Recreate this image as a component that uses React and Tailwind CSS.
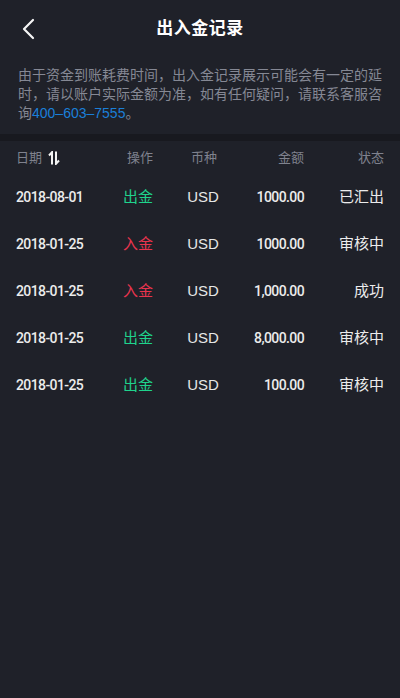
import React from "react";

const records = [
  { date: "2018-08-01", type: "out", currency: "USD", amount: "1000.00", status: "已汇出" },
  { date: "2018-01-25", type: "in", currency: "USD", amount: "1000.00", status: "审核中" },
  { date: "2018-01-25", type: "in", currency: "USD", amount: "1,000.00", status: "成功" },
  { date: "2018-01-25", type: "out", currency: "USD", amount: "8,000.00", status: "审核中" },
  { date: "2018-01-25", type: "out", currency: "USD", amount: "100.00", status: "审核中" },
];

const font = { fontFamily: "Roboto, 'Noto Sans CJK SC', sans-serif" };

const SortIcon = () => (
  <svg width="12" height="14" viewBox="0 0 12 14" fill="none" stroke="#f2f2f2" strokeWidth="2">
    <path d="M4 13.5V1.2L1 4.5" />
    <path d="M8 0.5V12.8L11 9.5" />
  </svg>
);

const App = () => {
  return (
    <div
      className="w-[400px] h-[698px] bg-[#1f2129] text-white overflow-hidden"
      style={font}
    >
      {/* HEADER */}
      <div className="h-[58px] relative flex items-center justify-center">
        <button className="absolute left-[18px] top-[14px] p-1">
          <svg width="14" height="22" viewBox="0 0 14 22" fill="none" stroke="#f5f5f5" strokeWidth="2.2" strokeLinecap="round" strokeLinejoin="round">
            <path d="M11 2L2 11L11 20" />
          </svg>
        </button>
        <h1 className="text-[17px] font-bold tracking-[0.5px]">出入金记录</h1>
      </div>

      {/* NOTICE */}
      <p className="px-[18px] pt-[8px] h-[76px] text-[14px] leading-[19px] text-[#858894]">
        由于资金到账耗费时间，出入金记录展示可能会有一定的延时，请以账户实际金额为准，如有任何疑问，请联系客服咨询
        <span className="text-[#1b7fd8] font-['Liberation_Sans',sans-serif]">400–603–7555</span>。
      </p>

      <div className="h-[7px] bg-[#18191f]" />

      {/* TABLE HEAD */}
      <div className="h-[33px] px-4 flex items-center text-[13px] text-[#7f828e]">
        <div className="w-[100px] flex items-center gap-[6px]">
          日期
          <SortIcon />
        </div>
        <div className="w-[48px] text-center">操作</div>
        <div className="w-[80px] text-center">币种</div>
        <div className="w-[60px] text-right">金额</div>
        <div className="w-[80px] text-right">状态</div>
      </div>

      {/* ROWS */}
      {records.map((r, i) => (
        <div key={i} className="h-[47px] px-4 flex items-center">
          <div className="w-[98px] text-[14px] font-medium tracking-[-0.6px] text-[#ececec]">
            {r.date}
          </div>
          <div
            className={
              r.type === "out"
                ? "w-[48px] text-center text-[15px] text-[#1fd38c]"
                : "w-[48px] text-center text-[15px] text-[#e8344e]"
            }
          >
            {r.type === "out" ? "出金" : "入金"}
          </div>
          <div className="w-[82px] text-center text-[15px] text-[#e6e6e6] font-['Liberation_Sans',sans-serif]">
            {r.currency}
          </div>
          <div className="w-[60px] text-right text-[14px] font-medium tracking-[-0.6px] text-[#ececec] whitespace-nowrap">
            {r.amount}
          </div>
          <div className="w-[80px] text-right text-[15px] text-[#ececec]">{r.status}</div>
        </div>
      ))}
    </div>
  );
};

export default App;
